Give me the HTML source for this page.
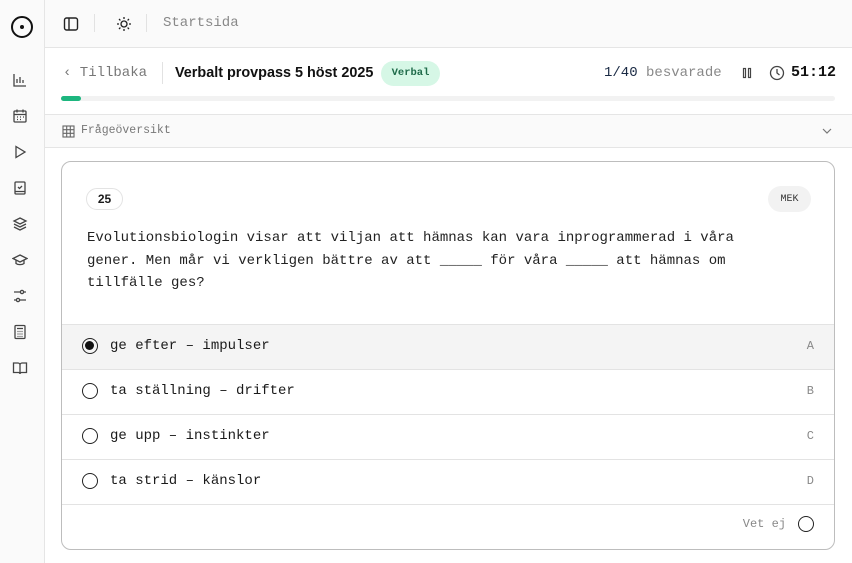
<!DOCTYPE html>
<html><head><meta charset="utf-8"><style>
*{box-sizing:border-box;margin:0;padding:0}
body{width:852px;height:563px;overflow:hidden;background:#fff;font-family:"Liberation Mono",monospace;color:#1a1a1a;position:relative}
.side{position:absolute;left:0;top:0;width:45px;height:563px;background:#fafafa;border-right:1px solid #e5e5e5}
.side svg{position:absolute;left:12px}
.top{position:absolute;left:45px;top:0;right:0;height:48px;background:#fafafa;border-bottom:1px solid #e5e5e5}
.hdr{position:absolute;left:45px;top:48px;right:0;height:67px;background:#fff;border-bottom:1px solid #e5e5e5}
.ov{position:absolute;left:45px;top:115px;right:0;height:33px;background:#fafafa;border-bottom:1px solid #e5e5e5}
.card{position:absolute;left:61px;top:161px;width:774px;height:389px;border:1px solid #bdbdbd;border-radius:10px;overflow:hidden;background:#fff}
.opt{position:absolute;left:0;right:0;height:45px;border-top:1px solid #e3e3e3;font-size:14px}
.opt .r{position:absolute;left:20px;top:13px;width:16px;height:16px;border:1.5px solid #222;border-radius:50%}
.opt .t{position:absolute;left:48px;top:13px}
.opt .l{position:absolute;right:20px;top:14px;font-size:12px;color:#888}
.sans{font-family:"Liberation Sans",sans-serif}
</style></head><body>
<div class="side">
<svg style="top:15px;left:10px" width="24" height="24" viewBox="0 0 24 24"><circle cx="12" cy="12" r="10" fill="none" stroke="#111" stroke-width="2"/><circle cx="12" cy="12" r="2" fill="#111"/></svg>
<svg style="top:72px" width="16" height="16" viewBox="0 0 16 16" fill="none" stroke="#444" stroke-width="1.3"><path d="M2 2v12h12M5 11V7M8 11V5M11 11V8"/></svg>
<svg style="top:108px" width="16" height="16" viewBox="0 0 16 16" fill="none" stroke="#444" stroke-width="1.3"><rect x="2" y="3" width="12" height="11" rx="1"/><path d="M2 6.5h12M5 1.5v3M11 1.5v3M5 9h1M8 9h1M11 9h1M5 11.5h1M8 11.5h1"/></svg>
<svg style="top:144px" width="16" height="16" viewBox="0 0 16 16" fill="none" stroke="#444" stroke-width="1.3"><path d="M4 2.5l9 5.5-9 5.5z"/></svg>
<svg style="top:180px" width="16" height="16" viewBox="0 0 16 16" fill="none" stroke="#444" stroke-width="1.3"><rect x="3" y="2" width="10" height="12" rx="1"/><path d="M3 11.5h10M6 7l1.5 1.5L10 6"/></svg>
<svg style="top:216px" width="16" height="16" viewBox="0 0 16 16" fill="none" stroke="#444" stroke-width="1.3"><path d="M8 2l6 3-6 3-6-3zM2 8l6 3 6-3M2 11l6 3 6-3"/></svg>
<svg style="top:252px" width="16" height="16" viewBox="0 0 16 16" fill="none" stroke="#444" stroke-width="1.3"><path d="M8 3l7 3.5-7 3.5-7-3.5zM4 8v3.5c2 1.5 6 1.5 8 0V8"/></svg>
<svg style="top:288px" width="16" height="16" viewBox="0 0 16 16" fill="none" stroke="#444" stroke-width="1.3"><circle cx="10" cy="4" r="1.6"/><circle cx="6" cy="12" r="1.6"/><path d="M2 4h6.4M11.6 4H14M2 12h2.4M7.6 12H14"/></svg>
<svg style="top:324px" width="16" height="16" viewBox="0 0 16 16" fill="none" stroke="#444" stroke-width="1.3"><rect x="3" y="1.5" width="10" height="13" rx="1"/><path d="M5 4.5h6M5.5 7.5h1M7.5 7.5h1M9.5 7.5h1M5.5 10h1M7.5 10h1M9.5 10h1M5.5 12.5h1M7.5 12.5h1M9.5 12.5h1"/></svg>
<svg style="top:360px" width="16" height="16" viewBox="0 0 16 16" fill="none" stroke="#444" stroke-width="1.3"><path d="M1.5 3h4.5a2 2 0 012 2v9a1.5 1.5 0 00-1.5-1.5H1.5zM14.5 3H10a2 2 0 00-2 2v9a1.5 1.5 0 011.5-1.5h5z"/></svg>
</div>
<div class="top">
<svg style="position:absolute;left:18px;top:16px" width="16" height="16" viewBox="0 0 16 16" fill="none" stroke="#222" stroke-width="1.4"><rect x="1.5" y="2" width="13" height="12" rx="2"/><path d="M6 2v12"/></svg>
<div style="position:absolute;left:49px;top:14px;width:1px;height:18px;background:#e2e2e2"></div>
<svg style="position:absolute;left:71px;top:16px" width="16" height="16" viewBox="0 0 16 16" fill="none" stroke="#222" stroke-width="1.3"><circle cx="8" cy="8" r="3"/><path d="M8 1v2M8 13v2M1 8h2M13 8h2M3 3l1.4 1.4M11.6 11.6L13 13M3 13l1.4-1.4M11.6 4.4L13 3"/></svg>
<div style="position:absolute;left:101px;top:14px;width:1px;height:18px;background:#e2e2e2"></div>
<div style="position:absolute;left:118px;top:15px;font-size:14px;color:#888">Startsida</div>
</div>
<div class="hdr">
<div style="position:absolute;left:18px;top:17px;font-size:14px;color:#777">‹ Tillbaka</div>
<div style="position:absolute;left:117px;top:14px;width:1px;height:22px;background:#e2e2e2"></div>
<div class="sans" style="position:absolute;left:130px;top:17px;font-size:14.4px;font-weight:bold;color:#111">Verbalt provpass 5 höst 2025</div>
<div style="position:absolute;left:336px;top:13px;width:59px;height:25px;border-radius:13px;background:#d6f7e6;color:#1f6b4a;font-size:10.5px;font-weight:bold;text-align:center;line-height:25px">Verbal</div>
<div style="position:absolute;left:559px;top:17px;font-size:14px;color:#888"><span style="color:#1a2a44">1/40</span> besvarade</div>
<svg style="position:absolute;left:696px;top:19px" width="12" height="12" viewBox="0 0 12 12" fill="none" stroke="#444" stroke-width="1.2"><rect x="2.5" y="1.5" width="2" height="9"/><rect x="7.5" y="1.5" width="2" height="9"/></svg>
<svg style="position:absolute;left:724px;top:17px" width="16" height="16" viewBox="0 0 16 16" fill="none" stroke="#444" stroke-width="1.3"><circle cx="8" cy="8" r="6.5"/><path d="M8 4v4l2.5 2"/></svg>
<div style="position:absolute;left:746px;top:16px;font-size:15px;font-weight:bold;color:#111">51:12</div>
<div style="position:absolute;left:16px;top:48px;width:774px;height:5px;border-radius:3px;background:#f2f2f2"><div style="width:20px;height:5px;border-radius:3px;background:#1db67f"></div></div>
</div>
<div class="ov">
<svg style="position:absolute;left:17px;top:10px" width="13" height="13" viewBox="0 0 13 13" fill="none" stroke="#666" stroke-width="1.1"><rect x="1" y="1" width="11" height="11"/><path d="M4.7 1v11M8.3 1v11M1 4.7h11M1 8.3h11"/></svg>
<div style="position:absolute;left:36px;top:9px;font-size:11.5px;color:#777">Frågeöversikt</div>
<svg style="position:absolute;left:777px;top:12px" width="10" height="8" viewBox="0 0 10 8" fill="none" stroke="#777" stroke-width="1.2"><path d="M1 2l4 4 4-4"/></svg>
</div>
<div class="card">
<div class="sans" style="position:absolute;left:24px;top:26px;width:37px;height:22px;border:1px solid #e3e3e3;border-radius:11px;font-size:12px;font-weight:bold;text-align:center;line-height:20px">25</div>
<div style="position:absolute;left:706px;top:24px;width:43px;height:26px;border-radius:13px;background:#f2f2f2;font-size:10px;text-align:center;line-height:27px;color:#333">MEK</div>
<div style="position:absolute;left:25px;top:65px;font-size:14px;line-height:22.5px;color:#222;white-space:pre">Evolutionsbiologin visar att viljan att hämnas kan vara inprogrammerad i våra
gener. Men mår vi verkligen bättre av att _____ för våra _____ att hämnas om
tillfälle ges?</div>
<div class="opt" style="top:162px;background:#f4f4f4"><div class="r"><div style="width:9px;height:9px;border-radius:50%;background:#111;margin:2px"></div></div><div class="t">ge efter – impulser</div><div class="l">A</div></div>
<div class="opt" style="top:207px"><div class="r"></div><div class="t">ta ställning – drifter</div><div class="l">B</div></div>
<div class="opt" style="top:252px"><div class="r"></div><div class="t">ge upp – instinkter</div><div class="l">C</div></div>
<div class="opt" style="top:297px"><div class="r"></div><div class="t">ta strid – känslor</div><div class="l">D</div></div>
<div class="opt" style="top:342px"><div style="position:absolute;right:48px;top:12px;font-size:12px;color:#888">Vet ej</div><div class="r" style="left:auto;right:20px;top:11px"></div></div>
</div>
</body></html>
